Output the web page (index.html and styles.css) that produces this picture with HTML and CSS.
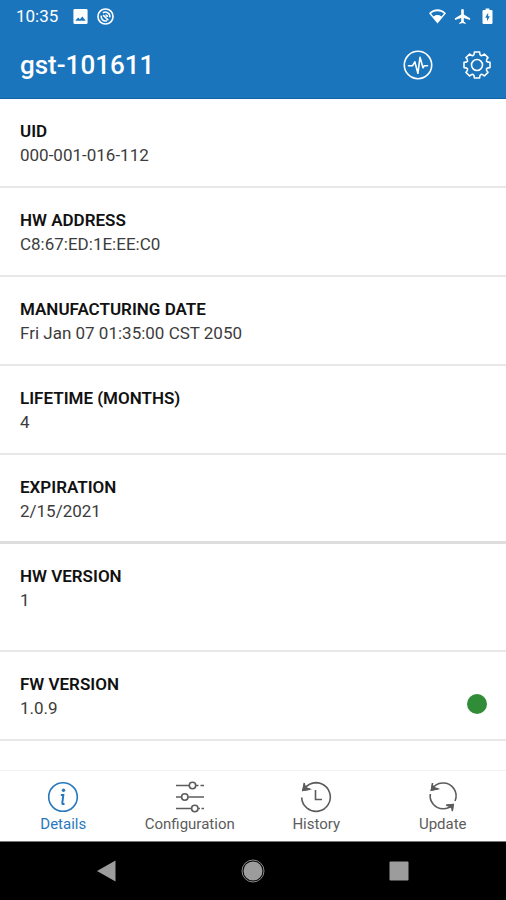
FILE: index.html
```html
<!DOCTYPE html>
<html lang="en">
<head>
<meta charset="utf-8">
<meta name="viewport" content="width=device-width, initial-scale=1">
<title>gst-101611</title>
<link rel="stylesheet" href="styles.css">
</head>
<body>
<div class="screen">
  <header class="top">
    <div class="status">
      <span class="clock">10:35</span>
      <svg class="s-icon" viewBox="0 0 18 18"><path fill="currentColor" fill-rule="evenodd" d="M3 1h12a1.500 1.500 0 0 1 1.500 1.500v13A1.500 1.500 0 0 1 15 17H3a1.500 1.500 0 0 1-1.500-1.500v-13A1.500 1.500 0 0 1 3 1zM3.500 13.500h11l-3.500-4.500-2.600 3-1.900-2z"/></svg>
      <svg class="s-icon" viewBox="0 0 18 18" fill="none" stroke="currentColor" stroke-width="1.700"><circle cx="9" cy="9" r="8"/><path d="M6.200 5.200A4.700 4.700 0 0 1 13.500 10M4.500 8A4.700 4.700 0 0 0 10.500 13.500M6.500 7.500l5.500 5.500M9 7.500a2 2 0 0 1 2 2"/></svg>
      <span class="spacer"></span>
      <svg class="s-icon" viewBox="0 0 18 18"><path fill="currentColor" fill-rule="evenodd" d="M9 16.500 0 5.500C5-.2 13-.2 18 5.500zM2.200 5.800 4.700 9c2.800-2 5.800-2 8.600 0l2.500-3.200C11.800 2.500 6.200 2.500 2.200 5.800z"/></svg>
      <svg class="s-icon" viewBox="0 0 18 18"><path fill="currentColor" d="M9 1a1.400 1.400 0 0 1 1.400 1.400v4.500l6.600 4v1.700l-6.600-2v3.700l2 1.500V17L9 16l-3.400 1v-1.200l2-1.500v-3.700l-6.600 2v-1.700l6.600-4V2.400A1.400 1.400 0 0 1 9 1z"/></svg>
      <svg class="s-icon" viewBox="0 0 18 18"><path fill="currentColor" fill-rule="evenodd" d="M7 .5h4V2h2q1.300 0 1.300 1.300v12.400q0 1.300-1.300 1.300H5q-1.300 0-1.300-1.300V3.300Q3.700 2 5 2h2zM9.700 5 6.500 10.200h2v3.800L11.500 8.700H9.700z"/></svg>
    </div>
    <div class="bar">
      <h1>gst-101611</h1>
      <button class="action" type="button" aria-label="Activity"><svg viewBox="0 0 30 30"><circle cx="15" cy="15" r="13.700"/><path d="M5.500 15.800h4l2.300-4 3.100 11.500 2.100-16 3 10.500 1.200-2h3.300"/></svg></button>
      <button class="action" type="button" aria-label="Settings"><svg viewBox="0 0 30 30"><g transform="translate(15 15)"><circle r="5.500"/><path d="M-2.600-13H2.600C2.600-9 4.500-8.200 7.350-11L11-7.350C8.200-4.500 9-2.600 13-2.600V2.600C9 2.600 8.200 4.500 11 7.350L7.350 11C4.500 8.200 2.600 9 2.600 13H-2.600C-2.600 9-4.500 8.200-7.350 11L-11 7.350C-8.200 4.500-9 2.600-13 2.600V-2.600C-9-2.600-8.200-4.500-11-7.350L-7.350-11C-4.500-8.200-2.600-9-2.600-13z"/></g></svg></button>
    </div>
  </header>
  <main>
    <dl class="list">
      <div class="row"><dt>UID</dt><dd>000-001-016-112</dd></div>
      <div class="row"><dt>HW ADDRESS</dt><dd>C8:67:ED:1E:EE:C0</dd></div>
      <div class="row"><dt>MANUFACTURING DATE</dt><dd>Fri Jan 07 01:35:00 CST 2050</dd></div>
      <div class="row"><dt>LIFETIME (MONTHS)</dt><dd>4</dd></div>
      <div class="row section-end"><dt>EXPIRATION</dt><dd>2/15/2021</dd></div>
      <div class="row tall"><dt>HW VERSION</dt><dd>1</dd></div>
      <div class="row with-dot"><dt>FW VERSION</dt><dd>1.0.9</dd><dd class="dot"></dd></div>
    </dl>
  </main>
  <nav class="tabs">
    <a class="active" href="#details"><svg viewBox="0 0 32 32"><circle cx="16" cy="16" r="14.300"/><circle cx="16.500" cy="9.300" r="1.700" fill="currentColor" stroke="none"/><path d="M13.800 14h2.500l-1 8q-.2 1.500 2.200.8" stroke-width="2"/></svg>Details</a>
    <a href="#configuration"><svg viewBox="0 0 32 32"><path d="M2 4.500h13M22 4.500h2.500M26.500 4.500H30M2 16h5M14.500 16H30M2 27.500h15M24.500 27.500H26M27.500 27.500H30"/><circle cx="18.500" cy="4.500" r="3.200"/><circle cx="10.800" cy="16" r="3.200"/><circle cx="20.800" cy="27.500" r="3.200"/></svg>Configuration</a>
    <a href="#history"><svg viewBox="0 0 32 32"><path d="M1.700 16.500A14.300 14.300 0 1 0 9.500 3.300Q6.500 4.800 3.800 8.500M9.500 3.300A14.300 14.300 0 0 1 16 1.700M15.500 9v9.500H22"/><path fill="currentColor" d="M4.500 4 3 9.300l6.200-1.200-3-1.100z"/><path d="M4.300 1.800 3 9.300l6.800-1.200"/></svg>History</a>
    <a href="#update"><svg viewBox="0 0 32 32"><path d="M5 8.300Q8 2.500 15.500 2A12.900 12.900 0 0 1 28 20M3.300 13A12.900 12.900 0 0 0 16 27.800Q21.500 28 25.500 24.200"/><path fill="currentColor" d="M5.500 4.500 4.500 9l5.800-1.200-3-1.100zM20 24.200l6-.5-.6 4.500-1.500-2.500z"/><path d="M5.500 2 4.500 9l6.800-1.200M19 24.200l7-.5-.8 6.500"/></svg>Update</a>
  </nav>
  <div class="system">
    <button type="button" aria-label="Back"><svg viewBox="0 0 24 24"><path d="M20.500 1.500v21L2 12z"/></svg></button>
    <button type="button" aria-label="Home"><svg viewBox="0 0 24 24"><circle cx="12" cy="12" r="9.500"/><circle class="ring" cx="12" cy="12" r="11"/></svg></button>
    <button type="button" aria-label="Recent apps"><svg viewBox="0 0 24 24"><rect x="2.500" y="2.500" width="19" height="19" rx="1"/></svg></button>
  </div>
</div>
</body>
</html>
```
FILE: styles.css
```css
* {
  box-sizing: border-box;
}

body {
  margin: 0;
  font-family: Roboto, "Liberation Sans", sans-serif;
  background: #fff;
}

.screen {
  display: flex;
  flex-direction: column;
  min-height: 100vh;
}

button {
  padding: 0;
  border: 0;
  background: none;
  color: inherit;
}

svg {
  display: block;
}

.top {
  background: #1b75bc;
  border-bottom: 1px solid #0f62aa;
  color: #fff;
}

.status {
  display: flex;
  align-items: center;
  gap: 8px;
  height: 32px;
  padding: 0 10px 0 16px;
  font-size: 17px;
}

.clock {
  margin-right: 6px;
}

.s-icon {
  width: 17px;
  height: 17px;
}

.spacer {
  flex: 1;
}

.bar {
  display: flex;
  align-items: center;
  gap: 29px;
  height: 66px;
  padding: 0 14px 0 20px;
}

h1 {
  flex: 1;
  margin: 0;
  font-size: 26px;
  font-weight: 500;
}

.action svg {
  width: 30px;
  height: 30px;
  fill: none;
  stroke: currentColor;
  stroke-width: 1.6;
  stroke-linejoin: round;
  stroke-linecap: round;
}

main {
  flex: 1;
}

.list {
  margin: 0;
}

.row {
  padding: 20px 20px 19px;
  border-bottom: 2px solid #e8e8e8;
  font-size: 17px;
  line-height: 24px;
}

.row.section-end {
  padding-bottom: 18px;
  border-bottom: 3px solid #dedede;
}

.row.tall {
  padding-bottom: 38px;
}

dt {
  color: #111;
  font-weight: 600;
}

dd {
  margin: 0;
  color: #3c3c3c;
}

.with-dot {
  display: grid;
  grid-template-columns: 1fr auto;
  padding-right: 19px;
}

.dot {
  grid-column: 2;
  grid-row: 1 / 3;
  align-self: end;
  width: 20px;
  height: 20px;
  margin-bottom: 6px;
  border-radius: 50%;
  background: #318c38;
}

.tabs {
  display: grid;
  grid-template-columns: repeat(4, 1fr);
  height: 71px;
  border-top: 1px solid #f2f2f2;
}

.tabs a {
  display: flex;
  flex-direction: column;
  align-items: center;
  gap: 1px;
  padding-top: 10px;
  color: #5c5c5c;
  font-size: 15px;
  line-height: 20px;
  text-decoration: none;
}

.tabs .active {
  color: #2878bd;
}

.tabs svg {
  width: 32px;
  height: 32px;
  fill: none;
  stroke: currentColor;
  stroke-width: 1.6;
}

.system {
  display: flex;
  justify-content: space-between;
  align-items: center;
  height: 59px;
  padding: 0 95px;
  border-top: 1px solid #777;
  background: #000;
}

.system svg {
  width: 24px;
  height: 24px;
  fill: #9c9c9c;
}

.system .ring {
  fill: none;
  stroke: #8a8a8a;
}
```
